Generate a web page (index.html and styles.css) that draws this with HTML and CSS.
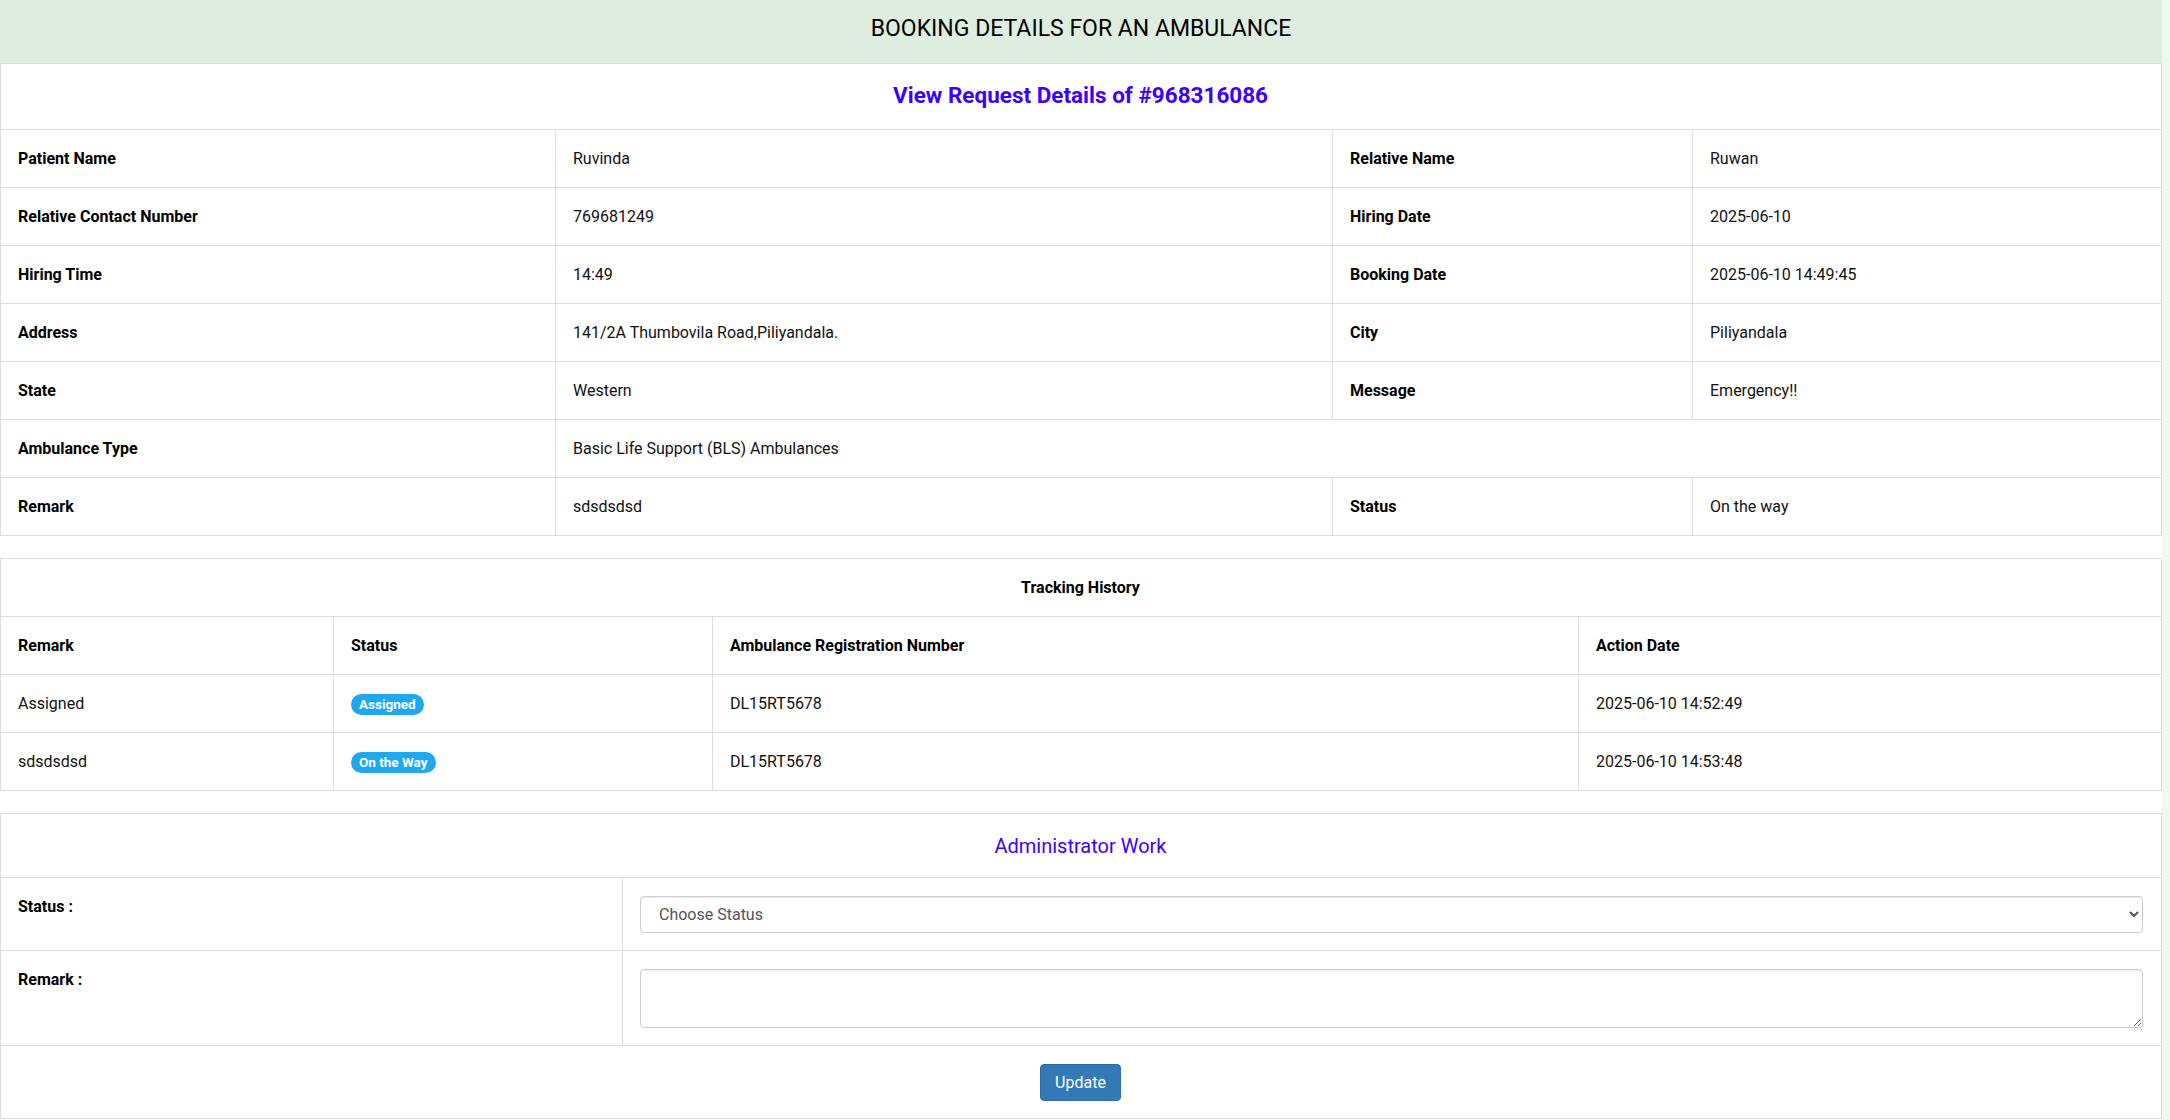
FILE: index.html
```html
<!DOCTYPE html>
<html lang="en">
<head>
<meta charset="utf-8">
<title>Booking Details for an Ambulance</title>
<link rel="stylesheet" href="styles.css">
</head>
<body>
<div class="page">
  <div class="page-header">BOOKING DETAILS FOR AN AMBULANCE</div>

  <table class="grid info">
    <colgroup>
      <col class="i1"><col class="i2"><col class="i3"><col class="i4">
    </colgroup>
    <tr><td colspan="4" class="title-cell request-title">View Request Details of #968316086</td></tr>
    <tr><th>Patient Name</th><td>Ruvinda</td><th>Relative Name</th><td>Ruwan</td></tr>
    <tr><th>Relative Contact Number</th><td>769681249</td><th>Hiring Date</th><td>2025-06-10</td></tr>
    <tr><th>Hiring Time</th><td>14:49</td><th>Booking Date</th><td>2025-06-10 14:49:45</td></tr>
    <tr><th>Address</th><td>141/2A Thumbovila Road,Piliyandala.</td><th>City</th><td>Piliyandala</td></tr>
    <tr><th>State</th><td>Western</td><th>Message</th><td>Emergency!!</td></tr>
    <tr><th>Ambulance Type</th><td colspan="3">Basic Life Support (BLS) Ambulances</td></tr>
    <tr><th>Remark</th><td>sdsdsdsd</td><th>Status</th><td>On the way</td></tr>
  </table>

  <table class="grid tracking">
    <colgroup>
      <col class="t1"><col class="t2"><col class="t3"><col class="t4">
    </colgroup>
    <tr><th colspan="4" class="tracking-title">Tracking History</th></tr>
    <tr><th>Remark</th><th>Status</th><th>Ambulance Registration Number</th><th>Action Date</th></tr>
    <tr><td>Assigned</td><td><span class="badge">Assigned</span></td><td>DL15RT5678</td><td>2025-06-10 14:52:49</td></tr>
    <tr><td>sdsdsdsd</td><td><span class="badge">On the Way</span></td><td>DL15RT5678</td><td>2025-06-10 14:53:48</td></tr>
  </table>

  <table class="grid admin">
    <colgroup>
      <col class="a1"><col class="a2">
    </colgroup>
    <tr><td colspan="2" class="title-cell admin-title">Administrator Work</td></tr>
    <tr>
      <th class="top">Status :</th>
      <td>
        <select class="form-control">
          <option>Choose Status</option>
          <option>On the way</option>
          <option>Pickup</option>
          <option>Reached</option>
          <option>Rejected</option>
        </select>
      </td>
    </tr>
    <tr>
      <th class="top">Remark :</th>
      <td><textarea class="form-control area"></textarea></td>
    </tr>
    <tr><td colspan="2" class="center"><button class="btn-primary" type="button">Update</button></td></tr>
  </table>
</div>
</body>
</html>
```

FILE: styles.css
```css
html, body {
  margin: 0;
  padding: 0;
}

body {
  background: #eefaef;
  font-family: Roboto, "Liberation Sans", Arial, sans-serif;
  font-size: 16px;
  color: #111;
}

.page {
  width: 2162px;
  min-height: 1120px;
  background: #fff;
}

.page-header {
  background: #deeddf;
  height: 63px;
  box-sizing: border-box;
  padding-top: 15px;
  line-height: 28px;
  font-size: 23px;
  text-align: center;
  color: #000;
}

.grid {
  width: 2162px;
  border-collapse: collapse;
  table-layout: fixed;
  margin-bottom: 22px;
}

.grid:last-child {
  margin-bottom: 0;
}

.grid th,
.grid td {
  border: 1px solid #dedede;
  padding: 17.5px 18px 17.5px 17px;
  line-height: 22px;
  font-size: 16px;
  text-align: left;
  vertical-align: middle;
}

.grid th {
  font-weight: 700;
  color: #000;
}

.grid th.top {
  vertical-align: top;
}

.i1 { width: 555px; }
.i2 { width: 777px; }
.i3 { width: 360px; }

.t1 { width: 333px; }
.t2 { width: 379px; }
.t3 { width: 866px; }

.a1 { width: 622px; }

.grid .title-cell {
  text-align: center;
  color: #3c00ff;
}

.grid .request-title {
  font-size: 22.5px;
  font-weight: 700;
  line-height: 31px;
  padding-top: 16px;
  padding-bottom: 18px;
}

.grid .admin-title {
  font-size: 20px;
  font-weight: 400;
  line-height: 28px;
}

.grid .tracking-title {
  text-align: center;
}

.grid .center {
  text-align: center;
}

.badge {
  display: inline-block;
  box-sizing: border-box;
  height: 21px;
  margin-top: 1px;
  background: #1fa8f0;
  color: #fff;
  font-weight: 700;
  font-size: 13.5px;
  line-height: 14px;
  padding: 3.5px 8px;
  border-radius: 11px;
  vertical-align: top;
}

.form-control {
  display: block;
  box-sizing: border-box;
  width: 100%;
  font-family: Roboto, "Liberation Sans", Arial, sans-serif;
  font-size: 16px;
  color: #555;
  background: #fff;
  border: 1px solid #ccc;
  border-radius: 4px;
  box-shadow: inset 0 1px 1px rgba(0, 0, 0, 0.075);
  margin: 0;
}

select.form-control {
  height: 37px;
  padding: 6px 10px 6px 14px;
}

textarea.form-control.area {
  height: 59px;
  padding: 6px 12px;
  resize: vertical;
}

.btn-primary {
  background: #337ab7;
  border: 1px solid #2e6da4;
  color: #fff;
  font-family: Roboto, "Liberation Sans", Arial, sans-serif;
  font-size: 16px;
  line-height: 23px;
  padding: 6px 14px;
  border-radius: 4px;
  cursor: pointer;
}
```
